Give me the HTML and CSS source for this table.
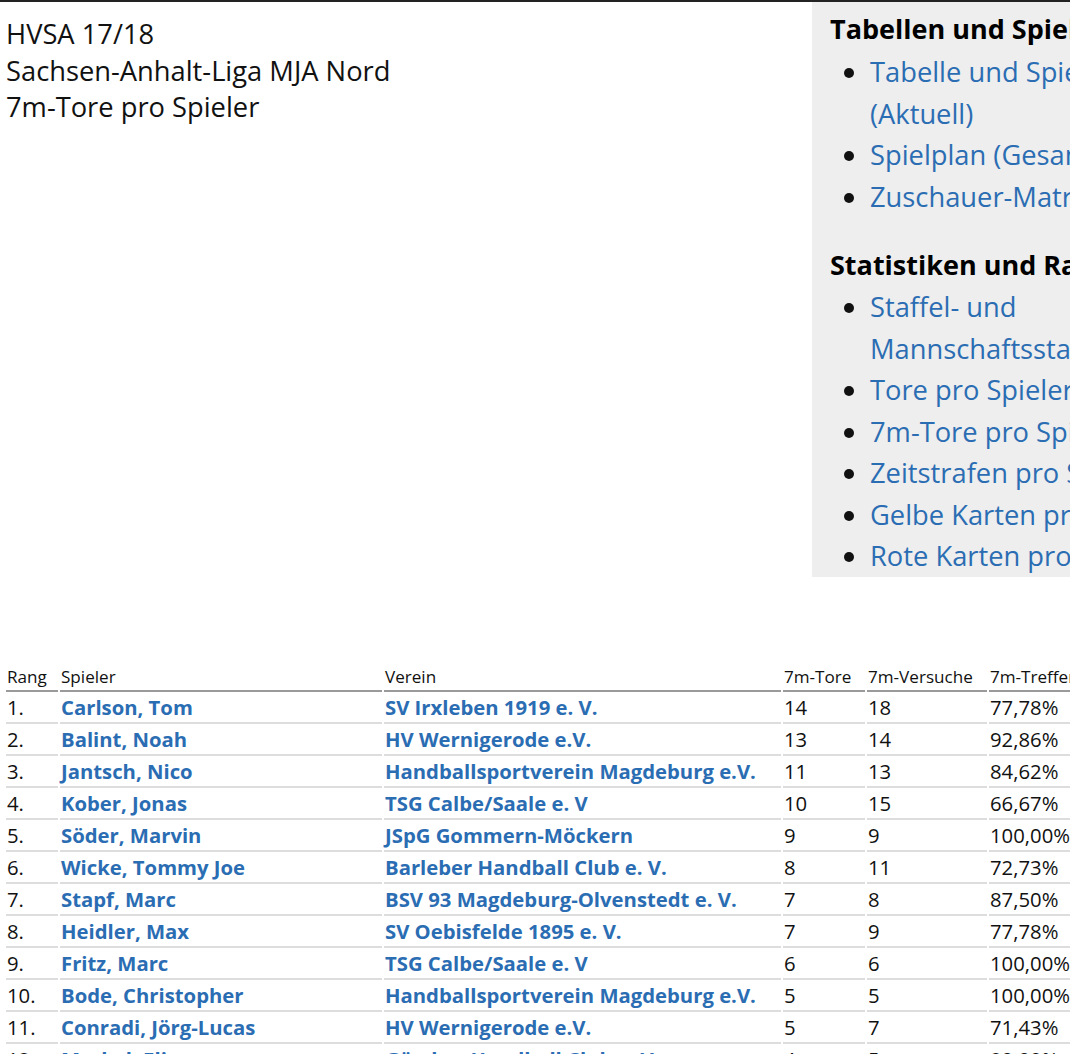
FILE: index.html
```html
<!DOCTYPE html>
<html lang="de">
<head>
<meta charset="utf-8">
<title>7m-Tore pro Spieler</title>
<link rel="stylesheet" href="styles.css">
</head>
<body>
<div class="page">
  <div class="top">
    <header class="title">
      <div>HVSA 17/18</div>
      <div>Sachsen-Anhalt-Liga MJA Nord</div>
      <div>7m-Tore pro Spieler</div>
    </header>
    <aside class="sidebar">
      <section>
        <h3>Tabellen und Spielpläne</h3>
        <ul>
          <li><a href="#">Tabelle und Spielplan (Aktuell)</a></li>
          <li><a href="#">Spielplan (Gesamt)</a></li>
          <li><a href="#">Zuschauer-Matrix</a></li>
        </ul>
      </section>
      <section>
        <h3>Statistiken und Ranglisten</h3>
        <ul>
          <li><a href="#">Staffel- und Mannschaftsstatistiken</a></li>
          <li><a href="#">Tore pro Spieler</a></li>
          <li><a href="#">7m-Tore pro Spieler</a></li>
          <li><a href="#">Zeitstrafen pro Spieler</a></li>
          <li><a href="#">Gelbe Karten pro Spieler</a></li>
          <li><a href="#">Rote Karten pro Spieler</a></li>
        </ul>
      </section>
    </aside>
  </div>

  <table class="stats">
    <colgroup>
      <col class="c-rang"><col class="c-spieler"><col class="c-verein"><col class="c-tore"><col class="c-vers"><col class="c-quote">
    </colgroup>
    <thead>
      <tr><th>Rang</th><th>Spieler</th><th>Verein</th><th>7m-Tore</th><th>7m-Versuche</th><th>7m-Trefferquote</th></tr>
    </thead>
    <tbody>
      <tr><td>1.</td><td><a href="#">Carlson, Tom</a></td><td><a href="#">SV Irxleben 1919 e. V.</a></td><td>14</td><td>18</td><td>77,78%</td></tr>
      <tr><td>2.</td><td><a href="#">Balint, Noah</a></td><td><a href="#">HV Wernigerode e.V.</a></td><td>13</td><td>14</td><td>92,86%</td></tr>
      <tr><td>3.</td><td><a href="#">Jantsch, Nico</a></td><td><a href="#">Handballsportverein Magdeburg e.V.</a></td><td>11</td><td>13</td><td>84,62%</td></tr>
      <tr><td>4.</td><td><a href="#">Kober, Jonas</a></td><td><a href="#">TSG Calbe/Saale e. V</a></td><td>10</td><td>15</td><td>66,67%</td></tr>
      <tr><td>5.</td><td><a href="#">Söder, Marvin</a></td><td><a href="#">JSpG Gommern-Möckern</a></td><td>9</td><td>9</td><td>100,00%</td></tr>
      <tr><td>6.</td><td><a href="#">Wicke, Tommy Joe</a></td><td><a href="#">Barleber Handball Club e. V.</a></td><td>8</td><td>11</td><td>72,73%</td></tr>
      <tr><td>7.</td><td><a href="#">Stapf, Marc</a></td><td><a href="#">BSV 93 Magdeburg-Olvenstedt e. V.</a></td><td>7</td><td>8</td><td>87,50%</td></tr>
      <tr><td>8.</td><td><a href="#">Heidler, Max</a></td><td><a href="#">SV Oebisfelde 1895 e. V.</a></td><td>7</td><td>9</td><td>77,78%</td></tr>
      <tr><td>9.</td><td><a href="#">Fritz, Marc</a></td><td><a href="#">TSG Calbe/Saale e. V</a></td><td>6</td><td>6</td><td>100,00%</td></tr>
      <tr><td>10.</td><td><a href="#">Bode, Christopher</a></td><td><a href="#">Handballsportverein Magdeburg e.V.</a></td><td>5</td><td>5</td><td>100,00%</td></tr>
      <tr><td>11.</td><td><a href="#">Conradi, Jörg-Lucas</a></td><td><a href="#">HV Wernigerode e.V.</a></td><td>5</td><td>7</td><td>71,43%</td></tr>
      <tr><td>12.</td><td><a href="#">Merkel, Elias</a></td><td><a href="#">Görzker Handball Club e. V.</a></td><td>4</td><td>5</td><td>80,00%</td></tr>
      <tr><td>13.</td><td><a href="#">Lange, Paul</a></td><td><a href="#">SV Irxleben 1919 e. V.</a></td><td>4</td><td>6</td><td>66,67%</td></tr>
    </tbody>
  </table>
</div>
</body>
</html>
```

FILE: styles.css
```css
html, body {
  margin: 0;
  padding: 0;
  background: #fff;
}

body {
  font-family: "Open Sans", "Noto Sans", "Liberation Sans", sans-serif;
  color: #111;
}

a {
  color: #2b6db3;
  text-decoration: none;
}

.page {
  border-top: 2px solid #222;
  width: 1260px;
  padding: 0 4px;
}

.top {
  display: flex;
  align-items: flex-start;
}

.title {
  width: 806px;
  flex: none;
  font-size: 27.3px;
  line-height: 36.5px;
  padding: 14px 0 0 2px;
}

.sidebar {
  flex: none;
  width: 380px;
  background: #eeeeee;
  padding: 10px 18px 0 18px;
}

.sidebar h3 {
  margin: 0 0 5px 0;
  font-size: 27px;
  font-weight: 700;
  line-height: 34px;
  color: #000;
}

.sidebar section + section {
  margin-top: 31px;
}

.sidebar section + section h3 {
  margin-bottom: 4px;
}

.sidebar ul {
  margin: 0;
  padding-left: 40px;
  font-size: 27.3px;
  line-height: 41.5px;
}

.stats {
  margin-top: 87px;
  border-collapse: separate;
  border-spacing: 2px 0;
  table-layout: fixed;
  width: 1127px;
}

.c-rang { width: 52px; }
.c-spieler { width: 322px; }
.c-verein { width: 397px; }
.c-tore { width: 82px; }
.c-vers { width: 120px; }
.c-quote { width: 140px; }

.stats th {
  font-size: 17.1px;
  font-weight: 400;
  line-height: 24px;
  text-align: left;
  padding: 1px 1px;
  border-bottom: 2px solid #9a9a9a;
  white-space: nowrap;
  overflow: hidden;
}

.stats td {
  font-size: 20.3px;
  line-height: 28px;
  padding: 1px 1px;
  border-bottom: 2px solid #dddddd;
  white-space: nowrap;
}

.stats td a {
  font-weight: 700;
}
```
